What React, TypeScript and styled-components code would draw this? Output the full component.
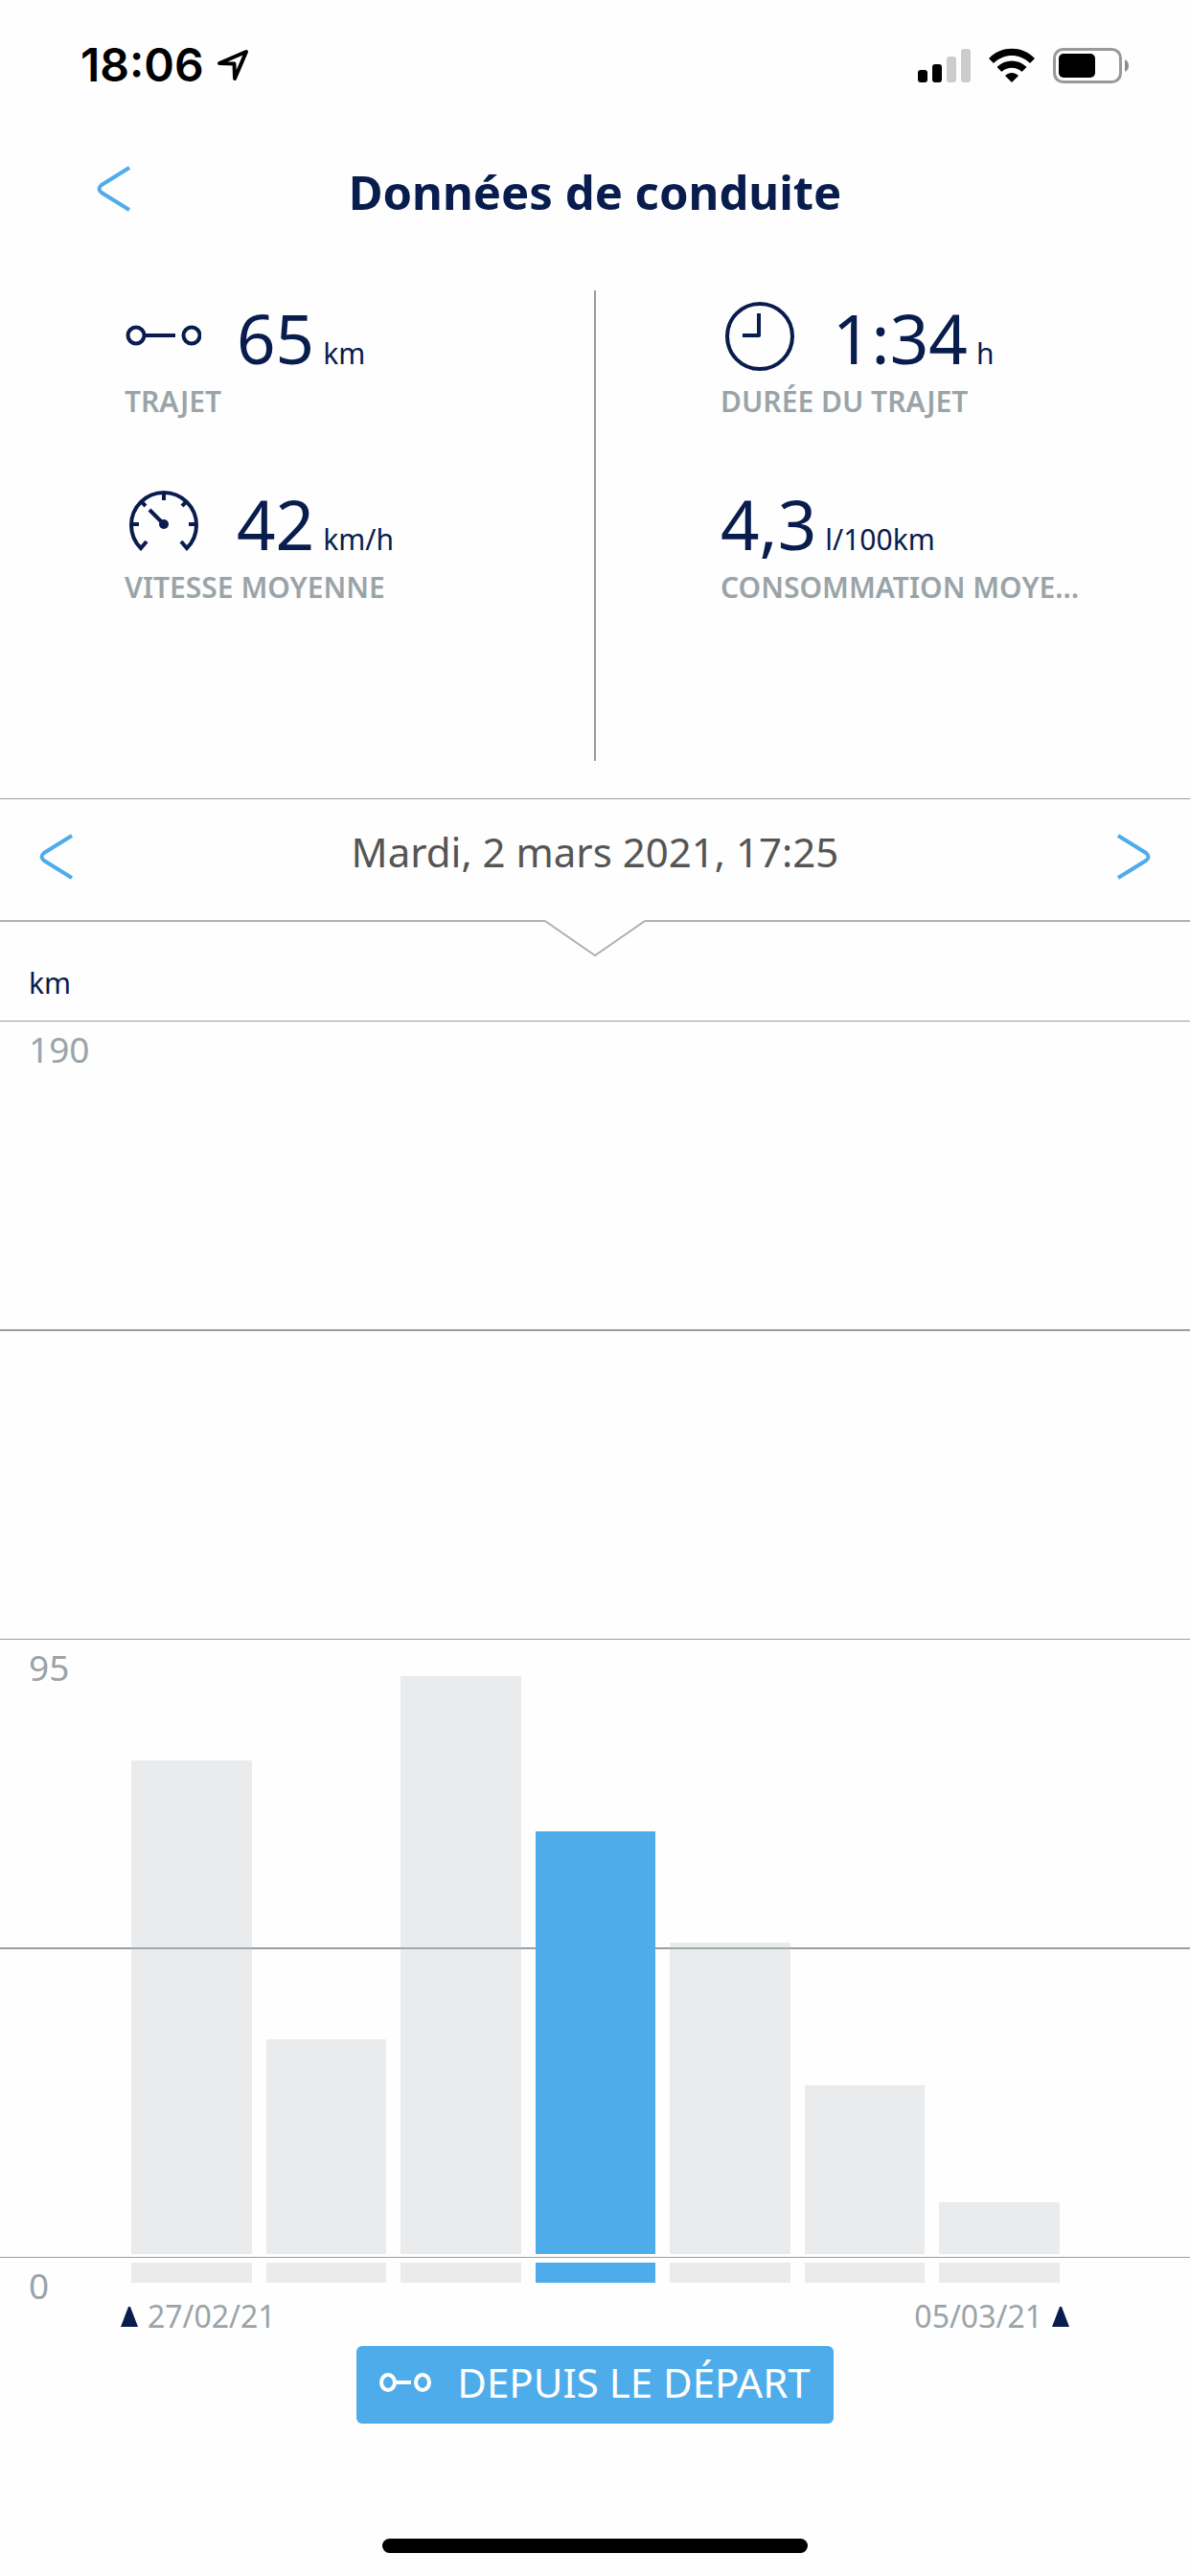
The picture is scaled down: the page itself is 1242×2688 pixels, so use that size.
import React from "react";
import styled, { createGlobalStyle } from "styled-components";

const navy = "#081c4d";
const sky = "#4facea";
const grey = "#9aa4a8";
const rule = "#96a0a3";

const GlobalStyle = createGlobalStyle`
  *, *::before, *::after { box-sizing: border-box; }
  body {
    margin: 0;
    background: #fefefe;
    color: ${navy};
    font-family: "Noto Sans", "Open Sans", sans-serif;
  }
  h1, p, dl, dt, dd, ul, li { margin: 0; padding: 0; }
  button { margin: 0; padding: 0; border: 0; background: none; font: inherit; cursor: pointer; }
  svg { display: block; flex: none; }
`;

const Screen = styled.div`
  display: flex;
  flex-direction: column;
  min-height: 100vh;
`;

const StatusBar = styled.header`
  display: flex;
  align-items: center;
  justify-content: space-between;
  height: 136px;
  padding: 0 64px 0 84px;
`;

const StatusGroup = styled.div<{ $gap: number }>`
  display: flex;
  align-items: center;
  gap: ${(p) => p.$gap}px;
`;

const Clock = styled.span`
  color: #000;
  font: 600 48px/56px Inter, "Liberation Sans", sans-serif;
`;

const TitleBar = styled.div`
  display: grid;
  grid-template-columns: 100px 1fr 100px;
  align-items: center;
  height: 128px;
  padding: 0 68px;
`;

const IconButton = styled.button`
  display: flex;
  align-items: center;
  justify-content: center;
  width: 100%;
  height: 96px;
  padding-bottom: 6px;
  color: ${sky};
`;

const Title = styled.h1`
  text-align: center;
  font-size: 49px;
  line-height: 64px;
  font-weight: 700;
`;

const Summary = styled.section`
  display: grid;
  grid-template-columns: 1fr 2px 1fr;
  padding: 39px 0;
`;

const Divider = styled.div`
  background: #999c9f;
`;

const MetricList = styled.dl`
  display: grid;
  grid-template-rows: 194px 194px;
  height: 491px;
  padding: 0 0 0 130px;
`;

const Metric = styled.div`
  display: flex;
  flex-direction: column-reverse;
  justify-content: flex-end;
`;

const Reading = styled.dd`
  display: flex;
  align-items: center;
  height: 94px;
`;

const IconSlot = styled.span`
  width: 117px;
`;

const Figure = styled.span`
  align-self: flex-end;
  font-size: 71px;
  line-height: 88px;
`;

const Unit = styled.span`
  margin-left: 9px;
  font-size: 30px;
  line-height: 30px;
`;

const Caption = styled.dt`
  color: ${grey};
  font-size: 30px;
  line-height: 44px;
  font-weight: 600;
  white-space: nowrap;
`;

const DateNav = styled.nav`
  display: grid;
  grid-template-columns: 116px 1fr 116px;
  align-items: center;
  height: 127px;
  border-top: 1px solid ${rule};
`;

const DateText = styled.p`
  padding-bottom: 16px;
  text-align: center;
  color: #555;
  font-size: 42px;
  line-height: 60px;
`;

const Notch = styled.div`
  display: flex;
  align-items: flex-start;
  height: 39px;
  color: #b0b0b0;
  &::before, &::after {
    content: "";
    flex: 1;
    height: 2px;
    background: currentColor;
  }
`;

const AxisUnit = styled.p`
  height: 66px;
  padding-left: 30px;
  font-size: 30px;
  line-height: 54px;
`;

const Chart = styled.section`
  position: relative;
`;

const Band = styled.div<{ $minor?: boolean }>`
  height: ${(p) => (p.$minor ? 323 : 322)}px;
  border-top: ${(p) => (p.$minor ? 2 : 1)}px solid ${rule};
`;

const AxisFoot = styled.div`
  height: 46px;
  border-top: 1px solid ${rule};
`;

const AxisLabel = styled.span`
  display: block;
  padding-left: 30px;
  color: ${grey};
  font-size: 37px;
  line-height: 58px;
`;

const Bars = styled.ul`
  position: absolute;
  inset: 0 136px 19px 137px;
  display: grid;
  grid-template-columns: repeat(7, 1fr);
  gap: 15px;
  list-style: none;
`;

const BarSlot = styled.li`
  display: grid;
`;

const BarButton = styled.button<{ $active: boolean }>`
  display: flex;
  flex-direction: column;
  justify-content: flex-end;
  gap: 9px;
  color: ${(p) => (p.$active ? sky : "rgba(188, 192, 198, 0.3)")};
`;

const BarTrack = styled.span`
  display: flex;
  align-items: flex-end;
  flex: 1;
`;

const BarFill = styled.span`
  width: 100%;
  background: currentColor;
`;

const BarStub = styled.span`
  height: 21px;
  background: currentColor;
`;

const Range = styled.div`
  display: flex;
  align-items: flex-start;
  justify-content: space-between;
  height: 47px;
  padding: 0 126px;
`;

const RangeDate = styled.span`
  display: flex;
  align-items: center;
  gap: 10px;
  color: ${grey};
  font-size: 32px;
  line-height: 32px;
`;

const Footer = styled.footer`
  display: flex;
  flex: 1;
  flex-direction: column;
  align-items: center;
  justify-content: space-between;
  padding-bottom: 24px;
`;

const ModeButton = styled.button`
  display: flex;
  align-items: center;
  gap: 26px;
  height: 81px;
  padding: 0 24px 6px;
  border-radius: 6px;
  background: ${sky};
  color: #fff;
  font-size: 42px;
  line-height: 60px;
`;

const HomeBar = styled.div`
  width: 444px;
  height: 15px;
  border-radius: 8px;
  background: #000;
`;

const Chevron = ({ flip }: { flip?: boolean }) => (
  <svg width="36" height="50" viewBox="0 0 36 50" fill="none" stroke="currentColor" strokeWidth="4" aria-hidden="true">
    <path d={flip ? "M1 3 L30 21 Q35 25 30 29 L1 47" : "M35 3 L6 21 Q1 25 6 29 L35 47"} />
  </svg>
);

const LocationIcon = () => (
  <svg width="34" height="34" viewBox="0 0 34 34" fill="none" stroke="#000" strokeWidth="4" strokeLinejoin="round" aria-hidden="true">
    <path d="M3 15 L31 3 L19 31 L18.500 15.500 Z" />
  </svg>
);

const SignalIcon = () => (
  <svg width="55" height="37" viewBox="0 0 55 37" aria-hidden="true">
    <rect x="0" y="23" width="10" height="13" rx="3" />
    <rect x="15" y="17" width="10" height="19" rx="3" />
    <rect x="30" y="9" width="10" height="27" rx="3" fill="#ccc" />
    <rect x="45" y="1" width="10" height="35" rx="3" fill="#ccc" />
  </svg>
);

const WifiIcon = () => (
  <svg width="48" height="37" viewBox="0 0 48 37" aria-hidden="true">
    <path d="M0.500 10.500 C13 -2.500 35 -2.500 47.500 10.500 Q48 11 47.500 11.500 L43.500 15.500 Q43 16 42.500 15.500 C32 5.500 16 5.500 5.500 15.500 Q5 16 4.500 15.500 L0.500 11.500 Q0 11 0.500 10.500 Z" />
    <path d="M9 19.500 C17 11.500 31 11.500 39 19.500 Q39.500 20 39 20.500 L35 24.500 Q34.500 25 34 24.500 C28.500 19.500 19.500 19.500 14 24.500 Q13.500 25 13 24.500 L9 20.500 Q8.500 20 9 19.500 Z" />
    <path d="M17.500 28.500 C21 25 27 25 30.500 28.500 Q31 29 30.500 29.500 L24.500 35.500 Q24 36 23.500 35.500 L17.500 29.500 Q17 29 17.500 28.500 Z" />
  </svg>
);

const BatteryIcon = () => (
  <svg width="79" height="37" viewBox="0 0 79 37" aria-hidden="true">
    <rect x="1.500" y="1.500" width="69" height="34" rx="9" fill="none" stroke="#999" strokeWidth="3" />
    <rect x="6" y="6" width="38" height="25" rx="5" />
    <path d="M75 12 Q79 14 79 18.500 Q79 23 75 25 Z" fill="#8c8c8c" />
  </svg>
);

const RouteIcon = () => (
  <svg width="80" height="24" viewBox="0 0 80 24" fill="none" stroke="currentColor" strokeWidth="4" aria-hidden="true">
    <circle cx="12" cy="12" r="8.500" />
    <circle cx="70" cy="12" r="8.500" />
    <path d="M21 12 H53" />
  </svg>
);

const SmallRouteIcon = () => (
  <svg width="55" height="20" viewBox="0 0 55 20" fill="none" stroke="currentColor" strokeWidth="4" aria-hidden="true">
    <ellipse cx="9" cy="10" rx="7" ry="8" />
    <ellipse cx="45" cy="10" rx="7" ry="8" />
    <path d="M17 10 H33" />
  </svg>
);

const ClockIcon = () => (
  <svg width="78" height="74" viewBox="0 0 78 74" fill="none" stroke="currentColor" strokeWidth="4" aria-hidden="true">
    <circle cx="41" cy="38" r="34" />
    <path d="M40 14 V37 H23" strokeLinejoin="round" />
  </svg>
);

const GaugeIcon = () => (
  <svg width="78" height="74" viewBox="0 0 78 74" fill="none" stroke="currentColor" strokeWidth="4" aria-hidden="true">
    <path d="M23 58 L17 65 A34 34 0 1 1 65 65 L59 58" />
    <path d="M41 6 V15 M65 16 L60 21 M75 40 H67 M7 40 H15 M17 16 L22 21" />
    <path d="M26 25 L41 40" />
    <circle cx="41" cy="40" r="5" fill="currentColor" stroke="none" />
  </svg>
);

const Marker = () => (
  <svg width="18" height="21" viewBox="0 0 18 21" fill={navy} aria-hidden="true">
    <path d="M8 0 H10 L18 21 H0 Z" />
  </svg>
);

const NotchArrow = () => (
  <svg width="104" height="39" viewBox="0 0 104 39" fill="none" stroke="currentColor" strokeWidth="2" aria-hidden="true">
    <path d="M0 1 L52 37 L104 1" />
  </svg>
);

type MetricData = { label: string; value: string; unit: string; icon?: React.ReactNode };

const leftMetrics: MetricData[] = [
  { label: "TRAJET", value: "65", unit: "km", icon: <RouteIcon /> },
  { label: "VITESSE MOYENNE", value: "42", unit: "km/h", icon: <GaugeIcon /> },
];

const rightMetrics: MetricData[] = [
  { label: "DURÉE DU TRAJET", value: "1:34", unit: "h", icon: <ClockIcon /> },
  { label: "CONSOMMATION MOYE…", value: "4,3", unit: "l/100km" },
];

const Metrics = ({ items }: { items: MetricData[] }) => (
  <MetricList>
    {items.map((m) => (
      <Metric key={m.label}>
        <Caption>{m.label}</Caption>
        <Reading>
          {m.icon && <IconSlot>{m.icon}</IconSlot>}
          <Figure>
            {m.value}
            <Unit>{m.unit}</Unit>
          </Figure>
        </Reading>
      </Metric>
    ))}
  </MetricList>
);

const plotHeight = 1287;
const trips = [515, 224, 603, 441, 325, 176, 54];
const selected = 3;

export default function App() {
  return (
    <Screen>
      <GlobalStyle />
      <StatusBar>
        <StatusGroup $gap={13}>
          <Clock>18:06</Clock>
          <LocationIcon />
        </StatusGroup>
        <StatusGroup $gap={19}>
          <SignalIcon />
          <WifiIcon />
          <BatteryIcon />
        </StatusGroup>
      </StatusBar>

      <TitleBar>
        <IconButton aria-label="Retour">
          <Chevron />
        </IconButton>
        <Title>Données de conduite</Title>
      </TitleBar>

      <Summary>
        <Metrics items={leftMetrics} />
        <Divider />
        <Metrics items={rightMetrics} />
      </Summary>

      <DateNav>
        <IconButton aria-label="Trajet précédent">
          <Chevron />
        </IconButton>
        <DateText>Mardi, 2 mars 2021, 17:25</DateText>
        <IconButton aria-label="Trajet suivant">
          <Chevron flip />
        </IconButton>
      </DateNav>
      <Notch>
        <NotchArrow />
      </Notch>

      <AxisUnit>km</AxisUnit>
      <Chart>
        <Band>
          <AxisLabel>190</AxisLabel>
        </Band>
        <Band $minor />
        <Band>
          <AxisLabel>95</AxisLabel>
        </Band>
        <Band $minor />
        <AxisFoot>
          <AxisLabel>0</AxisLabel>
        </AxisFoot>
        <Bars>
          {trips.map((height, i) => (
            <BarSlot key={i}>
              <BarButton $active={i === selected} aria-label={`Trajet ${i + 1}`}>
                <BarTrack>
                  <BarFill style={{ height: `${(height / plotHeight) * 100}%` }} />
                </BarTrack>
                <BarStub />
              </BarButton>
            </BarSlot>
          ))}
        </Bars>
      </Chart>
      <Range>
        <RangeDate>
          <Marker />
          27/02/21
        </RangeDate>
        <RangeDate>
          05/03/21
          <Marker />
        </RangeDate>
      </Range>

      <Footer>
        <ModeButton>
          <SmallRouteIcon />
          DEPUIS LE DÉPART
        </ModeButton>
        <HomeBar />
      </Footer>
    </Screen>
  );
}
